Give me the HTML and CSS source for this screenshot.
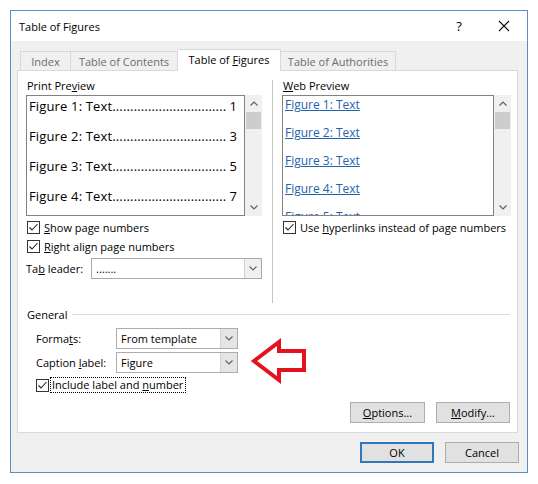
FILE: index.html
```html
<!DOCTYPE html>
<html>
<head>
<meta charset="utf-8">
<title>Table of Figures</title>
<link rel="stylesheet" href="styles.css">
</head>
<body>
<div class="dialog">
  <div class="titlebar">
    <span class="title">Table of Figures</span>
    <span class="help">?</span>
    <span class="close"><svg width="12" height="12" viewBox="0 0 12 12"><path d="M1 1L11 11M11 1L1 11" stroke="#111" stroke-width="1.1" fill="none"/></svg></span>
  </div>
  <div class="tabs">
    <div class="tab t1"><span>Index</span></div>
    <div class="tab t2"><span>Table of Contents</span></div>
    <div class="tab t3 active"><span>Table of <u>F</u>igures</span></div>
    <div class="tab t4"><span>Table of Authorities</span></div>
  </div>
  <div class="panel">
    <div class="top">
      <div class="col-left">
        <div class="lbl">Print Pre<u>v</u>iew</div>
        <div class="listwrap">
          <div class="list print">
            <div class="pline"><span class="ptext">Figure 1: Text................................</span><span class="num">1</span></div>
            <div class="pline"><span class="ptext">Figure 2: Text................................</span><span class="num">3</span></div>
            <div class="pline"><span class="ptext">Figure 3: Text................................</span><span class="num">5</span></div>
            <div class="pline"><span class="ptext">Figure 4: Text................................</span><span class="num">7</span></div>
          </div>
          <div class="sb">
            <div class="sbbtn"><svg width="8" height="5" viewBox="0 0 8 5"><polyline points="0.5,4.5 4,1 7.5,4.5" fill="none" stroke="#606060" stroke-width="1.2"/></svg></div>
            <div class="thumb"></div>
            <div class="sbfill"></div>
            <div class="sbbtn"><svg width="8" height="5" viewBox="0 0 8 5"><polyline points="0.5,0.5 4,4 7.5,0.5" fill="none" stroke="#606060" stroke-width="1.2"/></svg></div>
          </div>
        </div>
        <div class="chk first"><span class="box"><svg width="11" height="11" viewBox="0 0 11 11"><polyline points="1.5,5.5 4,8 9.5,2" fill="none" stroke="#222" stroke-width="1.1"/></svg></span><span><u>S</u>how page numbers</span></div>
        <div class="chk"><span class="box"><svg width="11" height="11" viewBox="0 0 11 11"><polyline points="1.5,5.5 4,8 9.5,2" fill="none" stroke="#222" stroke-width="1.1"/></svg></span><span><u>R</u>ight align page numbers</span></div>
        <div class="row tabrow">
          <span class="rlabel w65">Ta<u>b</u> leader:</span>
          <div class="combo w171"><span class="val">.......</span><span class="dd"><svg width="8" height="5" viewBox="0 0 8 5"><polyline points="0.5,0.5 4,4 7.5,0.5" fill="none" stroke="#606060" stroke-width="1.1"/></svg></span></div>
        </div>
      </div>
      <div class="sep"></div>
      <div class="col-right">
        <div class="lbl"><u>W</u>eb Preview</div>
        <div class="listwrap">
          <div class="list web">
            <div class="wline">Figure 1: Text</div>
            <div class="wline">Figure 2: Text</div>
            <div class="wline">Figure 3: Text</div>
            <div class="wline">Figure 4: Text</div>
            <div class="wline last">Figure 5: Text</div>
          </div>
          <div class="sb">
            <div class="sbbtn"><svg width="8" height="5" viewBox="0 0 8 5"><polyline points="0.5,4.5 4,1 7.5,4.5" fill="none" stroke="#606060" stroke-width="1.2"/></svg></div>
            <div class="thumb"></div>
            <div class="sbfill"></div>
            <div class="sbbtn"><svg width="8" height="5" viewBox="0 0 8 5"><polyline points="0.5,0.5 4,4 7.5,0.5" fill="none" stroke="#606060" stroke-width="1.2"/></svg></div>
          </div>
        </div>
        <div class="chk first"><span class="box"><svg width="11" height="11" viewBox="0 0 11 11"><polyline points="1.5,5.5 4,8 9.5,2" fill="none" stroke="#222" stroke-width="1.1"/></svg></span><span>Use <u>h</u>yperlinks instead of page numbers</span></div>
      </div>
    </div>
    <div class="general">
      <div class="ghead"><span>General</span><span class="gline"></span></div>
      <div class="row grow first">
        <span class="rlabel w80">Forma<u>t</u>s:</span>
        <div class="combo w122 gray"><span class="val">From template</span><span class="dd"><svg width="8" height="5" viewBox="0 0 8 5"><polyline points="0.5,0.5 4,4 7.5,0.5" fill="none" stroke="#606060" stroke-width="1.1"/></svg></span></div>
      </div>
      <div class="row grow">
        <span class="rlabel w80">Caption <u>l</u>abel:</span>
        <div class="combo w122 gray"><span class="val">Figure</span><span class="dd"><svg width="8" height="5" viewBox="0 0 8 5"><polyline points="0.5,0.5 4,4 7.5,0.5" fill="none" stroke="#606060" stroke-width="1.1"/></svg></span></div>
      </div>
      <div class="chk gchk"><span class="box"><svg width="11" height="11" viewBox="0 0 11 11"><polyline points="1.5,5.5 4,8 9.5,2" fill="none" stroke="#222" stroke-width="1.1"/></svg></span><span class="focus">Include label and <u>n</u>umber</span></div>
      <div class="btnrow">
        <div class="btn w75"><span><u>O</u>ptions...</span></div>
        <div class="btn w74"><span><u>M</u>odify...</span></div>
      </div>
    </div>
    <svg class="arrow" width="62" height="50" viewBox="0 0 62 50"><polygon points="6,25 31,6 31,15 56,15 56,34 31,34 31,44" fill="#fff" stroke="#e3121c" stroke-width="4" stroke-linejoin="miter"/></svg>
  </div>
  <div class="footer">
    <div class="btn w74 default"><span>OK</span></div>
    <div class="btn w74"><span>Cancel</span></div>
  </div>
</div>
</body>
</html>
```

FILE: styles.css
```css
* { box-sizing: border-box; }
html, body { margin: 0; padding: 0; background: #fff; }
body {
  font-family: "Open Sans", "Noto Sans", sans-serif;
  font-size: 11px;
  color: #000;
}
u { text-decoration: underline; text-underline-offset: 1px; }

.dialog {
  margin: 10px 0 0 10px;
  width: 518px;
  border: 1px solid #5a8fc4;
  background: #f0f0f0;
}

.titlebar {
  height: 30px;
  background: #fff;
  display: flex;
  align-items: center;
  padding-left: 8px;
}
.title { flex: 1; }
.help { width: 20px; text-align: center; margin-right: 20px; font-size: 13px; }
.close { width: 30px; margin-right: 8px; display: flex; justify-content: center; align-items: center; }

.tabs {
  display: flex;
  align-items: flex-start;
  height: 22px;
  margin-top: 8px;
  margin-bottom: -1px;
  padding-left: 9px;
}
.tab {
  height: 19px;
  margin-top: 2px;
  border-top: 1px solid #d9d9d9;
  border-right: 1px solid #d9d9d9;
  display: flex;
  align-items: center;
  justify-content: center;
  color: #6d6d6d;
  background: #f0f0f0;
  white-space: nowrap;
}
.t1 { width: 51px; border-left: 1px solid #d9d9d9; }
.t2 { width: 107px; }
.t3 { width: 103px; }
.t4 { width: 115px; }
.tab.active {
  height: 22px;
  margin-top: 0;
  background: #fff;
  color: #000;
  position: relative;
  z-index: 1;
  padding-bottom: 2px;
}

.panel {
  margin-left: 6px;
  width: 501px;
  background: #fff;
  border: 1px solid #d9d9d9;
  position: relative;
  padding-bottom: 9px;
}

.top {
  display: flex;
  height: 232px;
  padding: 7px 0 0 8px;
}
.col-left { width: 236px; }
.col-right { width: 229px; margin-left: 9px; }
.sep {
  width: 1px;
  margin-left: 10px;
  margin-top: 2px;
  height: 223px;
  background: #c4c4c4;
}

.lbl { height: 16px; line-height: 16px; padding-left: 1px; }
.listwrap { display: flex; height: 121px; margin-top: 1px; }
.list {
  flex: 1;
  border: 1px solid #828282;
  overflow: hidden;
  background: #fff;
}
.print { padding: 0 7px 0 2px; font-size: 13px; }
.pline { display: flex; height: 20px; line-height: 20px; margin-bottom: 10px; white-space: nowrap; }
.ptext { letter-spacing: 0.15px; }
.num { margin-left: auto; }
.web { padding-left: 2px; font-size: 12px; }
.wline {
  height: 18px;
  line-height: 18px;
  margin-bottom: 10px;
  color: #1f63ad;
  text-decoration: underline;
  white-space: nowrap;
}
.wline.last { height: 7px; margin-bottom: 0; overflow: hidden; }

.sb {
  width: 17px;
  background: #f0f0f0;
  display: flex;
  flex-direction: column;
}
.sbbtn { height: 17px; display: flex; align-items: center; justify-content: center; }
.thumb { height: 17px; margin: 0 1px; background: #cdcdcd; }
.sbfill { flex: 1; }

.chk { display: flex; align-items: center; height: 18px; margin-top: 1px; }
.chk.first { margin-top: 2px; }
.box {
  width: 13px;
  height: 13px;
  border: 1px solid #333;
  background: #fff;
  display: flex;
  align-items: center;
  justify-content: center;
  margin-left: 1px;
  margin-right: 4px;
}

.row { display: flex; align-items: center; height: 21px; }
.tabrow { margin-top: 3px; }
.rlabel { display: block; }
.w65 { width: 65px; }
.w80 { width: 80px; }
.combo {
  height: 21px;
  border: 1px solid #a9a9a9;
  display: flex;
  background: #fff;
}
.w171 { width: 171px; }
.w122 { width: 122px; }
.val { flex: 1; padding-left: 4px; line-height: 19px; }
.dd {
  width: 17px;
  border-left: 1px solid #cfcfcf;
  background: #f0f0f0;
  display: flex;
  align-items: center;
  justify-content: center;
}
.combo.gray { border-color: #adadad; }
.combo.gray .dd { background: #e5e5e5; border-left-color: #d0d0d0; }

.general { padding: 0 7px 0 8px; }
.ghead { display: flex; align-items: center; height: 16px; margin-top: 3px; padding-left: 1px; }
.gline { flex: 1; height: 1px; background: #dcdcdc; margin-left: 5px; }
.grow { margin-left: 10px; margin-top: 3px; }
.grow.first { margin-top: 6px; }
.gchk { margin-left: 9px; margin-top: 3px; }
.gchk .box { margin-right: 1px; }
.focus { border: 1px dotted #000; padding: 0 2px 0 1px; line-height: 14px; }

.btnrow { display: flex; justify-content: flex-end; gap: 11px; margin-top: 8px; }
.btn {
  height: 21px;
  border: 1px solid #adadad;
  background: #e1e1e1;
  display: flex;
  align-items: center;
  justify-content: center;
}
.w75 { width: 75px; }
.w74 { width: 74px; }
.btn.default { border: 2px solid #2f78bd; }

.footer {
  display: flex;
  justify-content: flex-end;
  gap: 11px;
  padding: 9px 8px 9px 0;
}

.arrow { position: absolute; left: 230px; top: 265px; }
```
